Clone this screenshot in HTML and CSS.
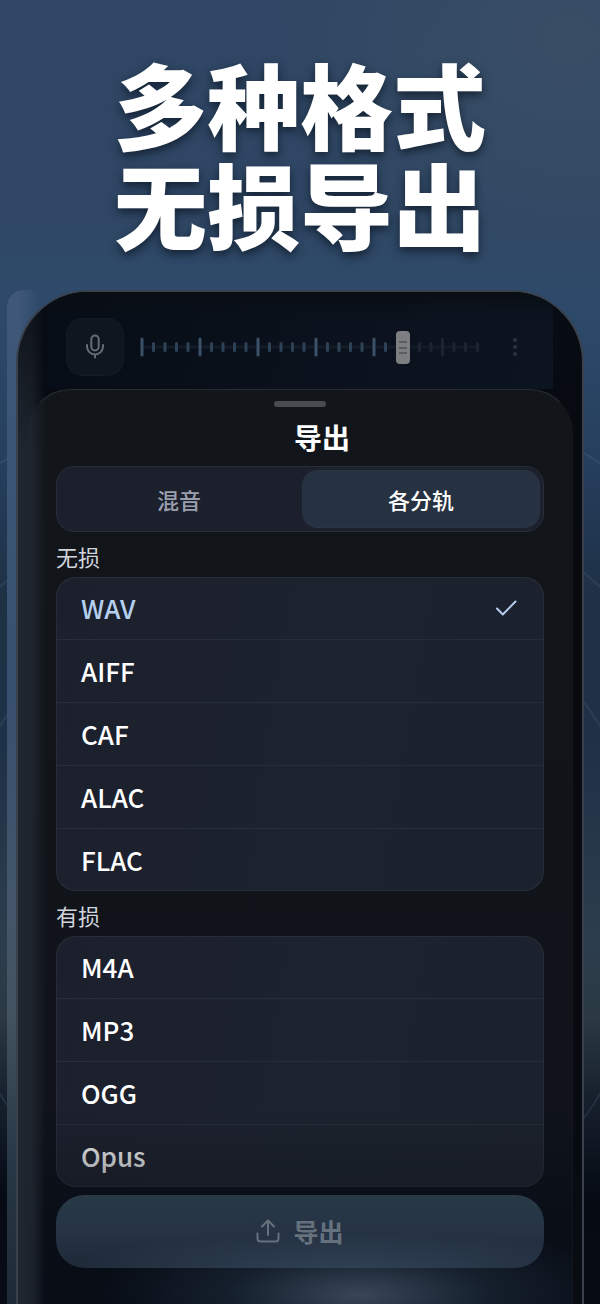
FILE: index.html
```html
<!DOCTYPE html>
<html lang="zh-CN">
<head>
    <meta charset="UTF-8">
    <meta name="viewport" content="width=device-width, initial-scale=1.0">
    <title>导出</title>
    <link rel="stylesheet" href="styles.css">
</head>
<body>
<div class="page">
    <!-- Background rings -->
    <svg class="rings" viewBox="0 0 600 1304" preserveAspectRatio="xMidYMin slice" aria-hidden="true">
        <circle cx="300" cy="910" r="352"/>
        <circle cx="300" cy="910" r="441"/>
        <circle cx="300" cy="910" r="538"/>
    </svg>

    <h1 class="headline">多种格式<br>无损导出</h1>

    <div class="device">
        <div class="phone">
            <!-- Recorder toolbar -->
            <div class="toolbar">
                <button class="mic-btn" type="button" aria-label="录音">
                    <svg width="22" height="26" viewBox="0 0 22 26">
                        <rect x="7.3" y="1.500" width="7.4" height="15" rx="3.7"/>
                        <path d="M3 11v1.500a8 8 0 0 0 16 0V11M11 20.500V23.500"/>
                    </svg>
                </button>
                <div class="timeline">
                    <svg class="ticks" viewBox="0 0 340 36" preserveAspectRatio="none" aria-hidden="true">
                        <path class="axis" d="M2 18H338"/>
                        <path class="minor" d="M13.500 14.500v7M25 14.500v7M36.500 14.500v7M48 14.500v7M71.500 14.500v7M83 14.500v7M94.500 14.500v7M106 14.500v7M129.500 14.500v7M141 14.500v7M152.500 14.500v7M164 14.500v7M187.500 14.500v7M199 14.500v7M210.500 14.500v7M222 14.500v7M245.500 14.500v7"/>
                        <path class="major" d="M2 10v16M60 10v16M118 10v16M176 10v16M234 10v16"/>
                        <path class="rest" d="M279.500 14.500v7M291 14.500v7M302.500 10v16M314 14.500v7M325.500 14.500v7M337.500 14.500v7"/>
                    </svg>
                    <input class="scrubber" type="range" min="0" max="1000" value="784" aria-label="播放位置">
                </div>
                <button class="more-btn" type="button" aria-label="更多">
                    <svg width="4" height="20" viewBox="0 0 4 20">
                        <circle cx="2" cy="3" r="2"/><circle cx="2" cy="10" r="2"/><circle cx="2" cy="17" r="2"/>
                    </svg>
                </button>
            </div>

            <!-- Export sheet -->
            <form class="sheet">
                <div class="grabber"></div>
                <h2 class="sheet-title">导出</h2>

                <div class="segment">
                    <button class="segment-item" type="button" aria-pressed="false">混音</button>
                    <button class="segment-item active" type="button" aria-pressed="true">各分轨</button>
                </div>

                <h3 class="group-title">无损</h3>
                <div class="list">
                    <label class="row">
                        <input type="radio" name="format" value="wav" checked>
                        <span>WAV</span>
                        <svg class="check" width="22" height="18" viewBox="0 0 22 18"><path d="M2 9.500l5.800 6L20.500 2.500"/></svg>
                    </label>
                    <label class="row"><input type="radio" name="format" value="aiff"><span>AIFF</span></label>
                    <label class="row"><input type="radio" name="format" value="caf"><span>CAF</span></label>
                    <label class="row"><input type="radio" name="format" value="alac"><span>ALAC</span></label>
                    <label class="row"><input type="radio" name="format" value="flac"><span>FLAC</span></label>
                </div>

                <h3 class="group-title">有损</h3>
                <div class="list list-faded">
                    <label class="row"><input type="radio" name="format" value="m4a"><span>M4A</span></label>
                    <label class="row"><input type="radio" name="format" value="mp3"><span>MP3</span></label>
                    <label class="row"><input type="radio" name="format" value="ogg"><span>OGG</span></label>
                    <label class="row"><input type="radio" name="format" value="opus"><span>Opus</span></label>
                </div>

                <button class="export-btn" type="submit">
                    <svg width="24" height="24" viewBox="0 0 24 24">
                        <path d="M12 16V2M6 7.500L12 1.500l6 6M1.500 14.500v5a3 3 0 0 0 3 3h15a3 3 0 0 0 3-3v-5"/>
                    </svg>
                    <span>导出</span>
                </button>
            </form>
        </div>
    </div>
</div>
</body>
</html>
```
FILE: styles.css
```css
* {
    box-sizing: border-box;
}

body {
    margin: 0;
    background: #060b14;
    color: #fff;
    font-family: "Noto Sans CJK SC", "Noto Sans", sans-serif;
}

button {
    font-family: inherit;
    padding: 0;
    border: none;
    background: none;
    color: inherit;
}

svg {
    display: block;
    fill: none;
    stroke-linecap: round;
    stroke-linejoin: round;
}

.page {
    position: relative;
    z-index: 0;
    min-height: 100vh;
    display: flex;
    flex-direction: column;
    overflow: hidden;
    background:
        radial-gradient(ellipse 50% 20% at 95% 3%, rgba(62, 82, 102, 0.7), transparent),
        linear-gradient(#2f4664 0, #2f4765 17%, #2e4a6a 23%, #263f5f 35%, #1e3044 46%, #1f3146 57%, #2c3d4d 72%, #2a3943 78%, #17212e 84%, #050a13 92%, #060b14 100%);
}

.rings {
    position: absolute;
    inset: 0;
    z-index: -1;
    width: 100%;
    height: 100%;
    stroke: rgba(120, 150, 175, 0.14);
    stroke-width: 2;
    -webkit-mask: linear-gradient(#000 86%, transparent 88%);
    mask: linear-gradient(#000 86%, transparent 88%);
}

.headline {
    margin: 0;
    padding: 53px 0 37px;
    font-size: 93px;
    line-height: 100px;
    font-weight: 900;
    text-align: center;
    text-shadow: 0 4px 10px rgba(8, 18, 32, 0.7);
}

/* Phone frame */
.device {
    position: relative;
    flex: 1;
    display: flex;
    padding: 0 16px;
}

/* side edge of the phone */
.device::before {
    content: '';
    position: absolute;
    top: 0;
    bottom: 0;
    left: 7px;
    width: 60px;
    border-radius: 16px 0 0 0;
    background: linear-gradient(#40587a 0, #3a5676 15%, #38506f 40%, #43566a 60%, #43525f 72%, #2a3947 85%, #1d2a38 100%);
    -webkit-mask: linear-gradient(to right, #000 12px, transparent 32px);
    mask: linear-gradient(to right, #000 12px, transparent 32px);
}

.phone {
    position: relative;
    flex: 1;
    display: flex;
    flex-direction: column;
    overflow: hidden;
    border: 2px solid #3a414c;
    border-bottom: none;
    border-radius: 72px 72px 0 0;
    background: linear-gradient(#070c13, #080a0e 30%, #080b12);
}

/* reflection along the left edge */
.phone::after {
    content: '';
    position: absolute;
    top: 0;
    bottom: 0;
    left: 0;
    width: 28px;
    pointer-events: none;
    background: linear-gradient(to right, rgba(34, 42, 52, 0.9), rgba(34, 41, 50, 0.8) 50%, transparent);
    -webkit-mask: linear-gradient(rgba(0, 0, 0, 0.3), #000 160px);
    mask: linear-gradient(rgba(0, 0, 0, 0.3), #000 160px);
}

/* Toolbar */
.toolbar {
    display: flex;
    align-items: center;
    gap: 16px;
    margin: 0 29px;
    padding: 26px 19px 13px;
    background:
        linear-gradient(#090e14, transparent 26px),
        linear-gradient(100deg, #070d16, #0b121d 60%, #0c1420);
}

.mic-btn {
    display: flex;
    justify-content: center;
    align-items: center;
    width: 58px;
    height: 58px;
    border: 1px solid #131b26;
    border-radius: 16px;
    background: #0f1620;
}

.mic-btn svg {
    stroke: #666c75;
    stroke-width: 2;
}

.timeline {
    position: relative;
    flex: 1;
    height: 36px;
}

.ticks {
    width: 100%;
    height: 36px;
    stroke-width: 3;
}

.ticks .axis {
    stroke: #121b28;
}

.ticks .minor {
    stroke: #2e4257;
}

.ticks .major {
    stroke: #3b5168;
}

.ticks .rest {
    stroke: #1b2430;
}

.scrubber {
    -webkit-appearance: none;
    appearance: none;
    position: absolute;
    inset: 0;
    width: 100%;
    height: 36px;
    margin: 0;
    background: transparent;
}

.scrubber::-webkit-slider-thumb {
    -webkit-appearance: none;
    width: 14px;
    height: 33px;
    border-radius: 4px;
    background:
        linear-gradient(#5c5d61, #5c5d61) center 10px / 8px 2px no-repeat,
        linear-gradient(#5c5d61, #5c5d61) center 16px / 8px 2px no-repeat,
        linear-gradient(#5c5d61, #5c5d61) center 21px / 8px 2px no-repeat,
        #7d7e81;
}

.more-btn {
    display: flex;
    justify-content: center;
    align-items: center;
    width: 38px;
    height: 58px;
}

.more-btn svg {
    fill: #2c333d;
}

/* Sheet */
.sheet {
    flex: 1;
    display: flex;
    flex-direction: column;
    margin: 0 9px;
    padding: 11px 28px 36px;
    border: 1px solid #13171d;
    border-top-color: #282d35;
    border-bottom: none;
    border-radius: 44px 44px 0 0;
    background:
        radial-gradient(ellipse 260px 80px at 61% 99%, rgba(64, 80, 98, 0.85), rgba(34, 50, 68, 0.5) 50%, transparent),
        linear-gradient(#12161b 0, #10141a 78%, #0b0f17 88%, #070c15 100%);
}

.grabber {
    align-self: center;
    width: 52px;
    height: 6px;
    border-radius: 3px;
    background: #494b50;
}

.sheet-title {
    margin: 0;
    padding: 10px 0 9px 44px;
    font-size: 28px;
    line-height: 40px;
    font-weight: 700;
    text-align: center;
}

.segment {
    display: grid;
    grid-template-columns: 1fr 1fr;
    gap: 4px;
    height: 66px;
    padding: 3px;
    border: 1px solid #272e3a;
    border-radius: 18px;
    background: #1b202c;
}

.segment-item {
    border-radius: 15px;
    font-size: 22px;
    line-height: 32px;
    font-weight: 500;
    color: #9a9fae;
}

.segment-item.active {
    border: 1px solid #2a3442;
    background: #263141;
    color: #fff;
}

.group-title {
    margin: 0;
    padding: 6px 0 3px;
    font-size: 22px;
    line-height: 36px;
    font-weight: 400;
    color: #d2d4dc;
}

.list {
    position: relative;
    border-radius: 20px;
    background: linear-gradient(100deg, #1c202d, #1c232e 60%, #1c222d);
    box-shadow: inset 0 0 0 1px #272e39;
    overflow: hidden;
}

.row {
    display: flex;
    justify-content: space-between;
    align-items: center;
    height: 63px;
    padding: 0 27px 0 25px;
    border-bottom: 1px solid #262e39;
    font-size: 26px;
    line-height: 40px;
    font-weight: 500;
}

.row:last-child {
    height: 62px;
    border-bottom: none;
}

.row input {
    -webkit-appearance: none;
    appearance: none;
    position: absolute;
    margin: 0;
}

.row input:checked + span {
    color: #b5d0ee;
}

.check {
    stroke: #b5cbed;
    stroke-width: 2;
}

/* rows fade out above the export button */
.list-faded::after {
    content: '';
    position: absolute;
    left: 0;
    right: 0;
    bottom: 0;
    height: 76px;
    pointer-events: none;
    background: linear-gradient(transparent, rgba(17, 21, 29, 0.45));
}

.export-btn {
    display: flex;
    justify-content: center;
    align-items: center;
    gap: 13px;
    height: 73px;
    margin-top: 8px;
    padding-bottom: 2px;
    border-radius: 28px;
    font-size: 25px;
    line-height: 36px;
    font-weight: 700;
    color: #66717e;
    background:
        radial-gradient(ellipse 60% 60% at 60% 110%, rgba(66, 86, 112, 0.6), transparent),
        linear-gradient(#293947, #253344 50%, #1d2937);
}

.export-btn svg {
    stroke: #66717e;
    stroke-width: 2;
}
```
